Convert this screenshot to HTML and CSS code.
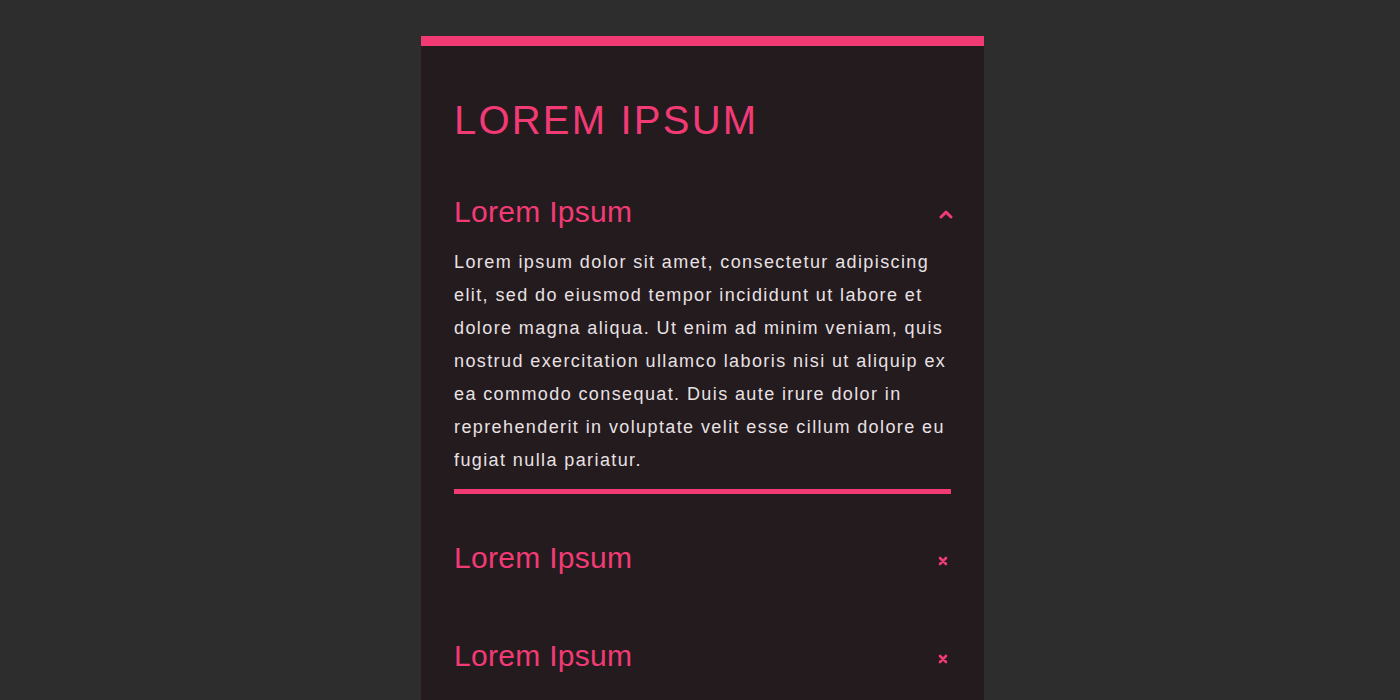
FILE: index.html
```html
<!DOCTYPE html>
<html lang="en">
<head>
<meta charset="utf-8">
<title>Accordion</title>
<link rel="stylesheet" href="styles.css">
</head>
<body>
<div class="page">
  <section class="card">
    <h1 class="title">LOREM IPSUM</h1>
    <div class="item open">
      <div class="item-head">
        <h2 class="item-title">Lorem Ipsum</h2>
        <svg class="icon chevron" width="14" height="9" viewBox="0 0 14 9"><path d="M2 7 L7 2.2 L12 7" fill="none" stroke="#f23a75" stroke-width="3" stroke-linecap="round" stroke-linejoin="round"/></svg>
      </div>
      <p class="item-body">Lorem ipsum dolor sit amet, consectetur adipiscing elit, sed do eiusmod tempor incididunt ut labore et dolore magna aliqua. Ut enim ad minim veniam, quis nostrud exercitation ullamco laboris nisi ut aliquip ex ea commodo consequat. Duis aute irure dolor in reprehenderit in voluptate velit esse cillum dolore eu fugiat nulla pariatur.</p>
    </div>
    <div class="item">
      <div class="item-head">
        <h2 class="item-title">Lorem Ipsum</h2>
        <svg class="icon cross" width="10" height="10" viewBox="0 0 10 10"><path d="M2 2 L8 8 M8 2 L2 8" fill="none" stroke="#f23a75" stroke-width="2.6" stroke-linecap="round"/></svg>
      </div>
    </div>
    <div class="item">
      <div class="item-head">
        <h2 class="item-title">Lorem Ipsum</h2>
        <svg class="icon cross" width="10" height="10" viewBox="0 0 10 10"><path d="M2 2 L8 8 M8 2 L2 8" fill="none" stroke="#f23a75" stroke-width="2.6" stroke-linecap="round"/></svg>
      </div>
    </div>
  </section>
</div>
</body>
</html>
```

FILE: styles.css
```css
html, body {
  margin: 0;
  padding: 0;
  background: #2e2d2e;
  height: 100%;
  overflow: hidden;
}

.page {
  display: flex;
  justify-content: center;
  padding: 36px 0 0 5px;
}

.card {
  width: 563px;
  box-sizing: border-box;
  background: #231b1e;
  border-top: 10px solid #f23a75;
  padding: 51px 33px 40px;
  font-family: "Liberation Sans", Arial, sans-serif;
  min-height: 700px;
}

.title {
  margin: 0 0 51px;
  font-size: 40px;
  font-weight: normal;
  letter-spacing: 2.2px;
  color: #f23a75;
  line-height: 46px;
}

.item-head {
  display: flex;
  align-items: center;
  justify-content: space-between;
}

.item-title {
  margin: 0;
  font-size: 30px;
  font-weight: normal;
  color: #f23a75;
  line-height: 36px;
  letter-spacing: 0.3px;
}

.icon { display: block; }
.chevron { margin-right: -2px; margin-top: 4px; }
.cross { margin-right: 3px; margin-top: 5px; }

.item-body {
  margin: 16px 0 0;
  font-size: 18px;
  line-height: 33px;
  letter-spacing: 1.4px;
  color: #e9e1e4;
}

.item.open {
  border-bottom: 5px solid #f23a75;
  padding-bottom: 12px;
}

.item.open + .item {
  margin-top: 46px;
}

.item:not(.open) + .item {
  margin-top: 62px;
}
```
